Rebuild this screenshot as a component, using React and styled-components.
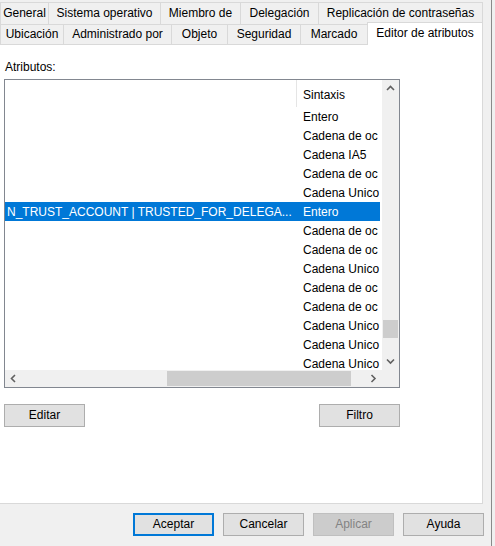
import React from 'react';
import styled, { createGlobalStyle } from 'styled-components';

const GlobalStyle = createGlobalStyle`
  html, body { margin: 0; padding: 0; }
  body {
    background: #f0f0f0;
    font-family: "Liberation Sans", Arial, sans-serif;
    font-size: 12px;
    color: #000;
  }
  * { box-sizing: border-box; }
`;

const Window = styled.div`
  width: 495px;
  height: 546px;
  display: flex;
  overflow: hidden;
  background: #f0f0f0;
`;

const Dialog = styled.div`
  width: 490px;
  margin-left: -1px;
  flex-shrink: 0;
  display: flex;
  flex-direction: column;
`;

const RightEdge = styled.div`
  flex: 1;
  padding-left: 2px;
  display: flex;
`;

const EdgeLine = styled.div`
  width: 1px;
  background: #8a8a8a;
`;

const TabArea = styled.div`
  width: 484px;
  display: flex;
  flex-direction: column;
`;

const TabRow = styled.div`
  display: flex;
  padding-left: 1px;
  height: ${p => p.$h}px;
  margin-top: ${p => p.$mt || 0}px;
`;

const Tab = styled.div`
  width: ${p => p.$w + (p.$last ? 1 : 0)}px;
  height: 100%;
  flex-shrink: 0;
  display: flex;
  align-items: center;
  justify-content: center;
  padding-bottom: 1px;
  white-space: nowrap;
  background: #f0f0f0;
  border-top: 1px solid #d9d9d9;
  border-left: 1px solid #d9d9d9;
  border-right: ${p => (p.$last ? '1px solid #d9d9d9' : 'none')};
`;

const ActiveTab = styled(Tab)`
  background: #fff;
  height: 23px;
  margin-top: -2px;
  padding-bottom: 3px;
  position: relative;
  z-index: 1;
`;

const TabPage = styled.div`
  height: 460px;
  background: #fff;
  border: 1px solid #d9d9d9;
  padding-left: 4px;
  display: flex;
  flex-direction: column;
`;

const FieldLabel = styled.div`
  margin-top: 15px;
  padding-left: 1px;
  line-height: 15px;
`;

const ListBox = styled.div`
  margin-top: 4px;
  width: 396px;
  height: 309px;
  border: 1px solid #828790;
  display: grid;
  grid-template-columns: 1fr 17px;
  grid-template-rows: 1fr 17px;
  background: #fff;
`;

const ListContent = styled.div`
  overflow: hidden;
  display: flex;
  flex-direction: column;
`;

const HeaderRow = styled.div`
  display: flex;
  height: 27px;
  flex-shrink: 0;
`;

const HeaderCell = styled.div`
  display: flex;
  align-items: center;
  padding-top: 3px;
  white-space: nowrap;
  ${p => (p.$first ? 'width: 292px; border-right: 1px solid #e5e5e5;' : 'padding-left: 6px;')}
`;

const Row = styled.div`
  display: flex;
  width: 375px;
  height: 19px;
  flex-shrink: 0;
  align-items: center;
  background: ${p => (p.$selected ? '#0078d7' : 'transparent')};
  color: ${p => (p.$selected ? '#fff' : '#000')};
`;

const Cell = styled.div`
  white-space: nowrap;
  ${p => (p.$first ? 'width: 292px; flex-shrink: 0; padding-left: 2px;' : 'padding-left: 6px;')}
`;

const VScroll = styled.div`
  background: #f0f0f0;
  display: flex;
  flex-direction: column;
`;

const HScroll = styled.div`
  background: #f0f0f0;
  display: flex;
`;

const Corner = styled.div`
  background: #f0f0f0;
`;

const ArrowBox = styled.div`
  width: 17px;
  height: 17px;
  flex-shrink: 0;
  display: flex;
  align-items: center;
  justify-content: center;
`;

const VTrack = styled.div`
  flex: 1;
  display: flex;
  flex-direction: column;
`;

const HTrack = styled.div`
  flex: 1;
  display: flex;
`;

const VThumb = styled.div`
  margin-top: ${p => p.$offset}px;
  height: ${p => p.$size}px;
  margin-left: 1px;
  margin-right: 1px;
  background: #cdcdcd;
`;

const HThumb = styled.div`
  margin-left: ${p => p.$offset}px;
  width: ${p => p.$size}px;
  margin-top: 1px;
  margin-bottom: 1px;
  background: #cdcdcd;
`;

const ActionRow = styled.div`
  margin-top: 16px;
  width: 396px;
  display: flex;
  justify-content: space-between;
`;

const Button = styled.div`
  width: 81px;
  height: 23px;
  display: flex;
  align-items: center;
  justify-content: center;
  background: ${p => (p.$disabled ? '#cccccc' : '#e1e1e1')};
  border: 1px solid ${p => (p.$default ? '#0078d7' : p.$disabled ? '#bfbfbf' : '#adadad')};
  box-shadow: ${p => (p.$default ? 'inset 0 0 0 1px #0078d7' : 'none')};
  color: ${p => (p.$disabled ? '#838383' : '#000')};
  padding-bottom: 1px;
`;

const Footer = styled.div`
  display: flex;
  justify-content: flex-end;
  gap: 9px;
  padding-top: 9px;
  padding-right: 5px;
`;

const Chevron = ({ dir }) => {
  const paths = {
    up: 'M1 5 L4.5 1.5 L8 5',
    down: 'M1 1.5 L4.5 5 L8 1.5',
    left: 'M5 1 L1.5 4.5 L5 8',
    right: 'M1.5 1 L5 4.5 L1.5 8',
  };
  const vertical = dir === 'up' || dir === 'down';
  return (
    <svg width={vertical ? 9 : 7} height={vertical ? 7 : 9} viewBox={vertical ? '0 0 9 7' : '0 0 7 9'}>
      <path d={paths[dir]} fill="none" stroke="#606060" strokeWidth="1.6" />
    </svg>
  );
};

const row1 = [
  ['General', 48],
  ['Sistema operativo', 112],
  ['Miembro de', 80],
  ['Delegación', 78],
  ['Replicación de contraseñas', 164],
];

const row2 = [
  ['Ubicación', 63],
  ['Administrado por', 108],
  ['Objeto', 56],
  ['Seguridad', 73],
  ['Marcado', 67],
];

const rows = [
  ['', 'Entero'],
  ['', 'Cadena de oc'],
  ['', 'Cadena IA5'],
  ['', 'Cadena de oc'],
  ['', 'Cadena Unico'],
  ['N_TRUST_ACCOUNT | TRUSTED_FOR_DELEGA...', 'Entero', true],
  ['', 'Cadena de oc'],
  ['', 'Cadena de oc'],
  ['', 'Cadena Unico'],
  ['', 'Cadena de oc'],
  ['', 'Cadena de oc'],
  ['', 'Cadena Unico'],
  ['', 'Cadena Unico'],
  ['', 'Cadena Unico'],
];

export default function App() {
  return (
    <>
      <GlobalStyle />
      <Window>
        <Dialog>
          <TabArea>
            <TabRow $h={22} $mt={2}>
              {row1.map(([t, w], i) => (
                <Tab key={t} $w={w} $last={i === row1.length - 1}>{t}</Tab>
              ))}
            </TabRow>
            <TabRow $h={20}>
              {row2.map(([t, w]) => (
                <Tab key={t} $w={w}>{t}</Tab>
              ))}
              <ActiveTab $w={115} $last>Editor de atributos</ActiveTab>
            </TabRow>
            <TabPage>
              <FieldLabel>Atributos:</FieldLabel>
              <ListBox>
                <ListContent>
                  <HeaderRow>
                    <HeaderCell $first />
                    <HeaderCell>Sintaxis</HeaderCell>
                  </HeaderRow>
                  {rows.map(([a, b, sel], i) => (
                    <Row key={i} $selected={sel}>
                      <Cell $first>{a}</Cell>
                      <Cell>{b}</Cell>
                    </Row>
                  ))}
                </ListContent>
                <VScroll>
                  <ArrowBox><Chevron dir="up" /></ArrowBox>
                  <VTrack>
                    <VThumb $offset={223} $size={18} />
                  </VTrack>
                  <ArrowBox><Chevron dir="down" /></ArrowBox>
                </VScroll>
                <HScroll>
                  <ArrowBox><Chevron dir="left" /></ArrowBox>
                  <HTrack>
                    <HThumb $offset={145} $size={184} />
                  </HTrack>
                  <ArrowBox><Chevron dir="right" /></ArrowBox>
                </HScroll>
                <Corner />
              </ListBox>
              <ActionRow>
                <Button>Editar</Button>
                <Button>Filtro</Button>
              </ActionRow>
            </TabPage>
          </TabArea>
          <Footer>
            <Button $default>Aceptar</Button>
            <Button>Cancelar</Button>
            <Button $disabled>Aplicar</Button>
            <Button>Ayuda</Button>
          </Footer>
        </Dialog>
        <RightEdge>
          <EdgeLine />
        </RightEdge>
      </Window>
    </>
  );
}
